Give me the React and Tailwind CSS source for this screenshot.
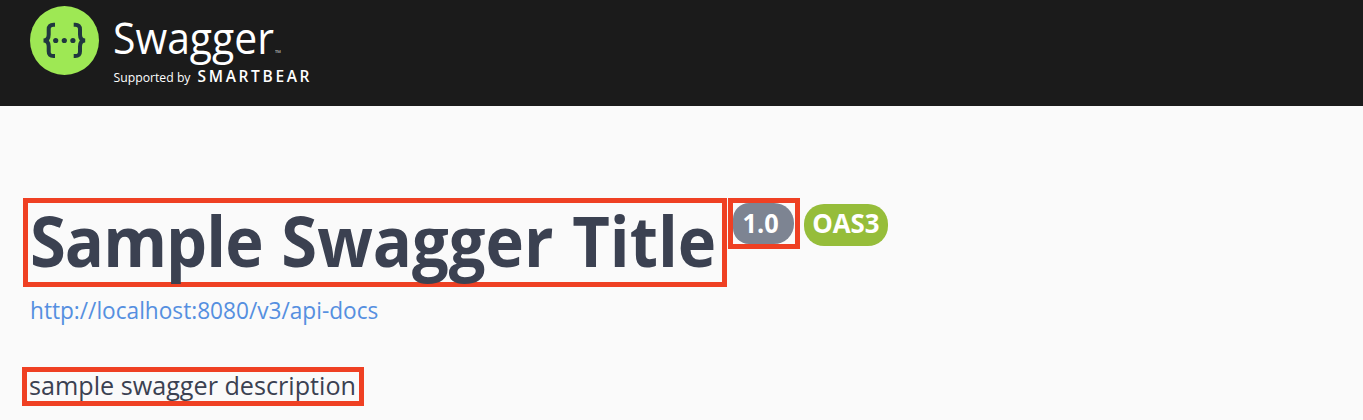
function SwaggerLogo() {
  return (
    <svg width="290" height="96" viewBox="0 0 290 96" role="img" aria-label="Swagger" className="block">
      <circle cx="34.5" cy="40.5" r="34.5" fill="#9ee854" />
      <g fill="none" stroke="#20373f" strokeWidth="4">
        <path d="M25 24.8H23.5Q18.6 24.8 18.7 29.5V34.5Q18.7 40.5 13.5 40.5Q18.7 40.5 18.7 46.5V51.2Q18.6 56.1 23.5 56.1H25" />
        <path d="M43.7 24.8H45.2Q50.1 24.8 50 29.5V34.5Q50 40.5 55.2 40.5Q50 40.5 50 46.5V51.2Q50.1 56.1 45.2 56.1H43.7" />
      </g>
      <g fill="#20373f">
        <circle cx="25.7" cy="40.5" r="2.6" />
        <circle cx="34.3" cy="40.5" r="2.6" />
        <circle cx="42.9" cy="40.5" r="2.6" />
      </g>
      <g fill="#fff" fontFamily="'Open Sans', sans-serif">
        <text x="83" y="54.3" fontSize="43.5" textLength="161" lengthAdjust="spacingAndGlyphs">Swagger</text>
        <text x="245" y="56" fontSize="8" opacity="0.7">™</text>
        <text x="83.5" y="82.2" fontSize="12" textLength="77" lengthAdjust="spacingAndGlyphs">Supported by</text>
        <text x="167.5" y="82.3" fontSize="15.5" fontWeight="600" textLength="112" lengthAdjust="spacing">SMARTBEAR</text>
      </g>
    </svg>
  );
}

export default function App() {
  return (
    <div className="h-[420px] overflow-hidden bg-[#fafafa] font-['Open_Sans',sans-serif] text-[#3b4151]">
      <header className="h-[106px] bg-[#1b1b1b] pl-[30px]">
        <SwaggerLogo />
      </header>
      <main className="flex flex-col items-start pt-[92px] pl-[22px]">
        <div className="flex items-start pl-px">
          <h1 className="flex h-[89px] w-[704px] items-center border-5 border-[#ef4023] pb-[4px] pl-[2px] text-[69px] leading-none font-bold whitespace-nowrap">
            <span className="origin-left scale-x-[0.942] [word-spacing:2px]">
              <span className="tracking-[-1px]">Sample</span> Swagger Title
            </span>
          </h1>
          <div className="ml-px flex h-[51px] w-[72px] border-5 border-[#ef4023]">
            <span className="flex h-[41px] w-[61px] items-center justify-center rounded-l-[16px] rounded-r-[20px] bg-[#7d8492] pr-[5px] pb-[2px] text-[27.5px] leading-none font-bold text-white">
              <span className="scale-x-[0.92]">1.0</span>
            </span>
          </div>
          <span className="mt-[6px] ml-[4px] flex h-[42px] w-[84px] items-center justify-center rounded-[20px] bg-[#96bd3a] pb-[5px] text-[27.5px] leading-none font-bold text-white">
            <span className="scale-x-[0.94]">OAS3</span>
          </span>
        </div>
        <a href="http://localhost:8080/v3/api-docs" className="mt-[7px] ml-[8px] origin-left scale-x-[0.984] text-[23px] leading-[32px] text-[#558fe0]">
          http://localhost:8080/v3/api-docs
        </a>
        <p className="mt-[41px] flex h-[39px] w-[342px] items-center border-5 border-[#ef4023] pb-[3px] pl-[2px] text-[26px] leading-none whitespace-nowrap">
          <span className="origin-left scale-x-[0.968]">sample swagger description</span>
        </p>
      </main>
    </div>
  );
}
